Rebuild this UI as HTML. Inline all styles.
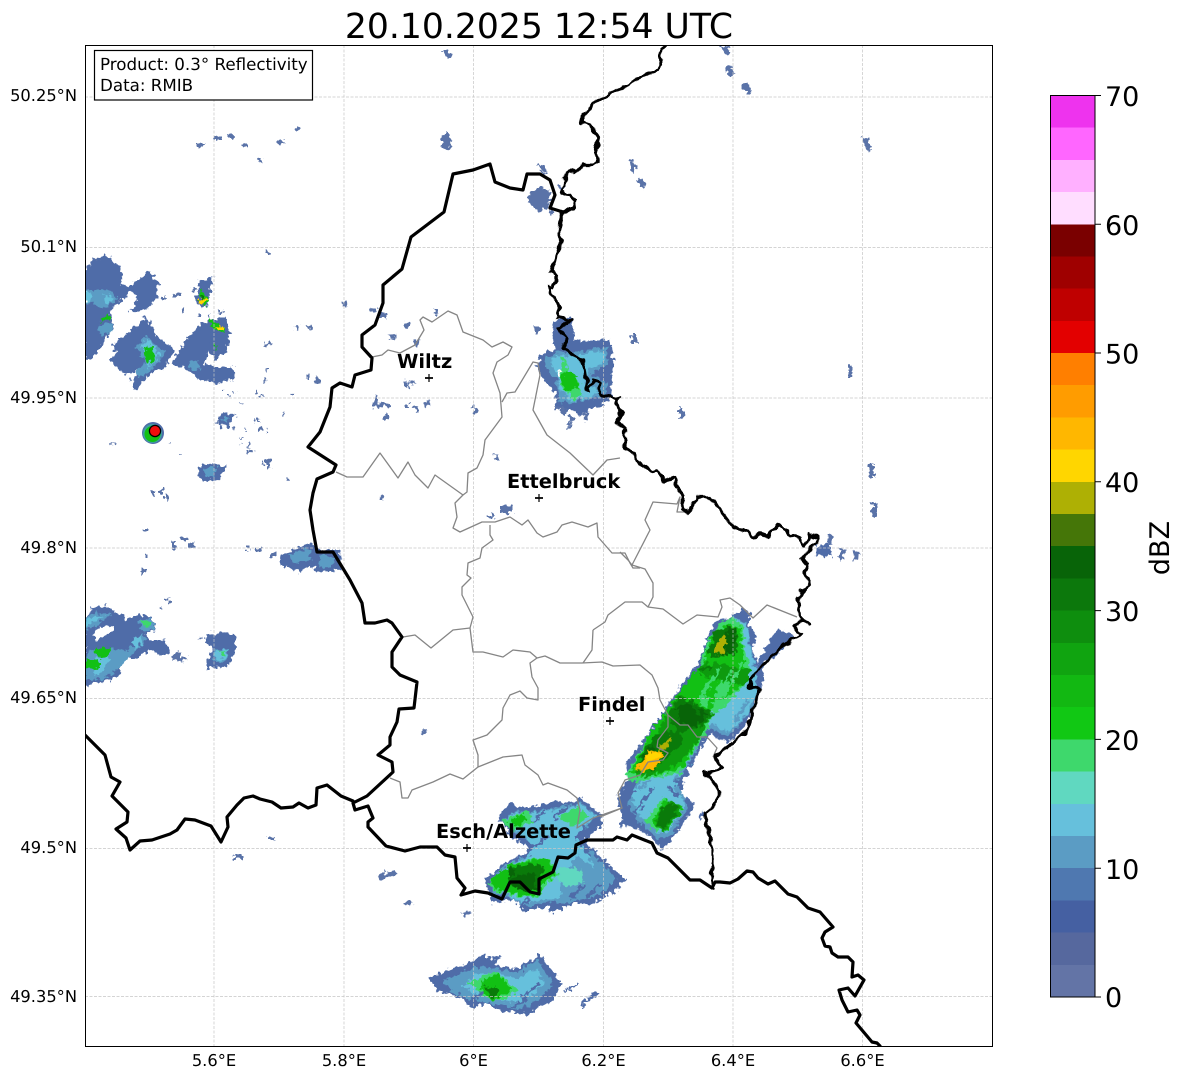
<!DOCTYPE html>
<html><head><meta charset="utf-8"><title>Radar</title>
<style>
html,body{margin:0;padding:0;background:#fff}
svg{display:block;text-rendering:geometricPrecision}
text{font-family:"DejaVu Sans","Liberation Sans",sans-serif;fill:#000}
.t{font-size:16.3px}
.u{font-size:16.7px}
.c{font-size:27px}
.n{font-size:19.4px;font-weight:bold}
.bd{fill:none;stroke:#000;stroke-width:3.2;stroke-linejoin:round;stroke-linecap:round}
.gy{fill:none;stroke:#858585;stroke-width:1.3;stroke-linejoin:round}
.gr{stroke:#c6c6c6;stroke-width:.7;stroke-dasharray:3 1.5;fill:none}
.b{fill:#4f6ca8}.d{fill:#4560a2}.m{fill:#5b9cc4}.l{fill:#66c0dc}.q{fill:#60d8c0}.g{fill:#3ed86c}.h{fill:#12c014}.i{fill:#0e9a0e}.k{fill:#0a7a0a}.e{fill:#086408}.o{fill:#aeb004}.y{fill:#ffd600}.a{fill:#ffb700}
.p{fill:#5a73a8}
.s{fill:none;stroke-width:9}
</style></head><body>
<svg width="1184" height="1081" viewBox="0 0 1184 1081" xmlns="http://www.w3.org/2000/svg">
<rect width="1184" height="1081" fill="#fff"/>
<defs>
<clipPath id="ax"><rect x="85" y="45" width="907.5" height="1001"/></clipPath>
<filter id="r" x="0" y="0" width="1184" height="1081" filterUnits="userSpaceOnUse" color-interpolation-filters="sRGB">
<feTurbulence type="fractalNoise" baseFrequency=".22" numOctaves="2" seed="5" result="n"/>
<feDisplacementMap in="SourceGraphic" in2="n" scale="9" xChannelSelector="R" yChannelSelector="G"/>
</filter>
<filter id="w" x="0" y="0" width="1184" height="1081" filterUnits="userSpaceOnUse" color-interpolation-filters="sRGB">
<feTurbulence type="fractalNoise" baseFrequency=".14" numOctaves="1" seed="9" result="n"/>
<feDisplacementMap in="SourceGraphic" in2="n" scale="8" xChannelSelector="R" yChannelSelector="G"/>
</filter>
</defs>
<g clip-path="url(#ax)">
<g filter="url(#r)">
<!-- upper left -->
<g transform="translate(85 240) scale(.3333)">
<polygon class="b" points="0,90 25,60 60,40 110,90 110,130 140,150 75,215 85,270 60,300 20,360 0,365"/>
<polygon class="b" points="125,145 195,90 220,130 215,180 175,215 135,215 160,170"/>
<polygon class="b" points="80,315 140,270 185,225 215,290 270,330 240,385 210,390 150,450 140,425 165,390 120,405 75,360 95,340"/>
<polygon class="b" points="260,370 300,300 350,250 375,240 420,230 435,270 425,335 395,360 370,335 355,375 450,385 445,420 400,430 345,420 310,390"/>
<polygon class="b" points="300,300 375,250 385,300 365,335 350,385 300,385"/>
<polygon class="b" points="345,120 385,110 365,200 345,200 330,175"/>
<polygon class="m" points="0,150 30,150 70,150 100,175 60,205 20,190 0,190"/>
<polygon class="l" points="0,155 20,165 15,185 0,185"/><polygon class="l" points="55,160 90,175 65,195"/>
<polygon class="m" points="40,250 80,250 80,280 45,285"/>
<polygon class="m" points="150,320 185,285 240,340 200,390 175,410 150,400 185,365"/>
<polygon class="l" points="165,320 190,295 225,345 190,385 195,360"/>
<polygon class="m" points="310,370 340,360 345,390 320,390"/>
<polygon class="h" points="170,335 195,315 215,350 200,370 180,355"/>
<polygon class="h" points="45,240 70,220 75,235 50,245"/>
<polygon class="h" points="340,170 350,145 375,185 360,200"/>
<polygon class="h" points="375,235 420,270 410,280 375,255"/>
<polygon class="h" points="385,312 395,312 392,328"/>
<path class="y" d="M345 178h22v10h-22zM400 258h14v12h-14z"/>
<path class="k" d="M345 170h12v8h-12z"/>
<path class="p" d="M20 55h22v8h-22zM230 170h10v10h-10zM265 160h22v14h-22zM290 208h8v8h-8zM318 145h12v8h-12zM335 220h8v8h-8zM370 225h8v8h-8zM400 210h10v12h-10zM415 215h6v6h-6zM548 34h10v8h-10zM773 185h10v12h-10zM631 258h10v10h-10zM669 256h10v8h-10zM541 308h18v8h-18zM544 385h8v8h-8zM537 417h8v8h-8zM666 405h8v8h-8zM690 412h14v12h-14zM618 457h9v8h-9zM411 450h5v6h-5zM427 465h8v8h-8zM444 453h5v5h-5zM510 452h6v6h-6zM528 462h8v8h-8zM465 486h5v5h-5zM591 521h9v4h-9zM504 540h8v4h-8zM520 538h5v8h-5zM516 565h14v10h-14zM542 565h6v8h-6zM480 568h5v5h-5zM468 591h5v5h-5zM488 605h8v18h-8zM490 630h12v8h-12zM546 658h12v30h-12zM530 668h6v8h-6zM606 713h8v6h-8zM74 611h16v3h-16zM250 610h4v4h-4zM285 642h6v4h-6zM465 610h6v4h-6zM440 562h8v6h-8z"/>
<polygon class="b" points="405,530 425,515 445,530 435,555 415,555"/>
<polygon class="m" points="415,530 430,525 435,540 422,548"/>
<path class="p" d="M392 545h10v6h-10zM448 525h6v6h-6z"/>
<polygon class="b" points="335,680 425,680 405,715 345,720"/>
<polygon class="m" points="350,690 375,685 372,705 355,705"/>
</g>
<!-- west small -->
<polygon class="b" points="279,556 310,543 320,550 340,550 342,570 320,572 310,565 300,572 280,565"/>
<polygon class="m" points="288,555 308,548 312,560 294,563"/><polygon class="m" points="318,555 334,556 332,566 320,568"/>
<!-- lower left -->
<g transform="translate(85 590) scale(.3333)">
<polygon class="b" points="0,90 20,50 70,45 90,70 115,75 125,90 160,75 200,80 215,120 185,130 190,150 235,150 260,185 235,200 190,180 160,205 105,210 100,260 30,280 0,285"/>
<polygon fill="#fff" points="25,130 45,110 88,108 80,130 30,150"/>
<polygon class="m" points="0,90 20,70 80,70 30,110 0,120"/>
<polygon class="l" points="5,92 30,78 55,78 20,100 0,112"/>
<polygon class="m" points="160,90 200,85 212,120 175,125"/>
<polygon class="m" points="10,180 80,175 130,180 170,130 180,150 140,200 70,260 30,270 0,270"/>
<polygon class="l" points="30,205 75,195 50,250 25,255"/><polygon class="l" points="145,145 170,135 170,160 145,180"/>
<polygon class="h" points="30,175 80,175 70,200 35,200"/><polygon class="h" points="0,210 45,210 45,235 0,235"/>
<polygon class="g" points="170,90 200,95 195,110 175,110"/>
<polygon class="b" points="365,130 450,130 450,190 425,230 365,235 380,170 360,160"/>
<polygon class="m" points="385,178 430,178 425,212 385,215"/>
<polygon class="l" points="390,182 428,180 420,205 392,208"/><polygon class="g" points="395,182 425,185 410,198"/>
<polygon class="p" points="262,208 275,185 285,185 285,200 308,205 285,218"/>
<path class="p" d="M240 25h12v8h-12zM250 35h8v10h-8zM222 50h8v8h-8zM346 140h10v8h-10z"/>
</g>
<!-- NE blob -->
<g transform="translate(300 160) scale(.3333)">
<polygon class="p" points="690,100 720,78 755,95 745,145 715,155 685,130"/>
<path class="p" d="M716 16l12-3 12 22-12 3zM768 72l12-3 10 16-12 3zM743 150l10-3 8 14-10 3zM128 425h12v14h-12zM215 442h14v14h-14zM240 456h18v18h-18zM314 487h14v14h-14zM268 520h20v18h-20zM341 538h18v18h-18zM401 448h14v18h-14zM23 496h14v12h-14zM19 645h13v10h-13zM43 652h16v14h-16zM313 664h13v16h-13zM328 660h16v16h-16zM223 706h11v14h-11zM218 720h14v24h-14zM232 728h38v12h-38zM316 732h12v12h-12zM343 740h13v16h-13zM376 722h13v18h-13zM250 762h14v16h-14zM520 740h13v20h-13zM583 880h10v20h-10zM703 498h14v22h-14zM238 1006h12v14h-12z"/>
</g>
<!-- N cell -->
<g transform="translate(500 300) scale(.3333)">
<polygon class="b" points="160,65 215,50 222,115 240,115 240,125 332,118 342,185 332,240 338,295 305,316 270,325 250,345 170,325 165,280 130,240 110,190 130,160 165,150 155,95"/>
<polygon class="m" points="135,170 190,155 235,155 320,140 322,190 270,225 318,245 318,285 260,300 190,310 175,280 170,240 140,210"/>
<polygon class="l" points="150,175 190,165 235,165 315,150 315,185 265,205 255,250 300,270 260,295 195,300 180,270 175,235"/>
<polygon class="m" points="175,275 200,280 205,310 180,310"/>
<polygon class="g" points="185,170 195,170 205,215 235,240 245,290 220,298 180,255"/>
<polygon class="h" points="180,240 195,212 230,225 235,260 200,275"/>
<rect x="172" y="215" width="12" height="15" fill="#fff"/>
<path class="p" d="M208 345h14v22h-14zM253 340h12v24h-12zM203 368h10v20h-10zM183 325h12v20h-12zM103 78h14v22h-14zM395 102h16v28h-16zM165 320h30v8h-30z"/>
</g>
<!-- SE main cell -->
<g transform="translate(600 600) scale(.3333)">
<polygon class="b" points="395,50 430,25 452,40 445,65 470,110 455,150 470,180 470,225 480,260 470,300 440,370 385,430 330,400 310,430 265,510 240,580 285,615 245,680 190,750 150,710 100,680 60,680 65,640 50,590 90,530 75,495 125,430 200,320 240,260 300,180 320,120 345,65"/>
<polygon class="b" points="470,190 530,90 580,105 540,160 490,190 490,255 470,260"/>
<polygon class="b" points="292,655 312,630 318,640 298,662"/>
<polygon class="m" points="400,50 440,70 455,150 470,215 470,295 440,355 385,410 330,385 300,425 260,505 225,545 255,595 262,625 210,710 180,720 110,660 80,610 110,545 80,530 110,470 240,280 300,200 325,120"/>
<polygon class="l" points="400,55 440,75 450,150 468,215 468,285 440,345 385,395 330,370 300,420 255,500 220,540 250,590 255,620 205,695 180,700 120,650 95,590 125,540 85,530 115,470 240,285 300,205 328,125"/>
<polygon class="g" points="390,50 430,80 430,150 450,180 445,245 400,290 360,335 340,335 320,400 290,440 240,520 190,530 130,540 85,545 80,520 150,400 240,280 300,200 320,130 360,70"/>
<polygon class="h" points="375,75 420,80 430,180 440,240 400,280 340,305 330,350 300,410 250,500 190,520 120,530 90,520 150,400 235,280 290,210 310,190 330,120"/>
<polygon class="g" points="355,250 395,245 380,285 345,300"/><polygon class="g" points="300,285 330,290 320,320 300,315"/>
<polygon class="i" points="300,190 350,190 450,210 440,255 360,240 300,225"/>
<polygon class="i" points="220,310 240,285 340,340 320,370 300,410 250,480 200,510 140,530 100,520 170,400"/>
<polygon class="k" points="225,315 245,290 335,340 310,375 240,400 200,345"/>
<polygon class="k" points="130,450 170,400 240,390 250,430 200,470 160,510 110,515"/>
<polygon class="e" points="230,320 260,310 320,340 290,380 240,370"/>
<polygon class="k" points="340,90 385,80 415,90 410,160 340,170 320,145 340,125"/>
<polygon class="e" points="385,85 410,90 400,160 365,165 375,110"/>
<polygon class="o" points="365,110 380,110 375,162 340,160 345,140"/>
<polygon class="e" points="115,490 150,440 170,445 130,500"/>
<polygon class="o" points="175,440 215,410 205,440 180,460"/>
<polygon class="a" points="150,450 190,460 170,500 130,515 100,510 130,480"/>
<polygon class="y" points="148,452 185,462 165,480 140,480"/>
<polygon class="g" points="135,665 190,590 250,630 190,690 165,690"/>
<polygon class="h" points="155,670 195,595 250,625 195,700 170,680"/>
<polygon class="i" points="175,640 210,600 245,630 190,700 165,675"/>
<polygon class="k" points="190,620 215,610 235,630 190,690 170,670"/>
<path class="s" stroke="#3ed86c" d="M305 285L360 205M350 270L395 215M395 250L425 190"/>
<path class="s" stroke="#66c0dc" d="M160 560L200 530M375 370L430 285M130 620L170 570"/>
<path class="s" stroke="#5b9cc4" d="M400 370L445 300M115 570L150 540M225 560L255 600"/>
<path class="s" stroke="#4f6ca8" d="M420 385L455 330M105 640L160 560M200 560L240 590M60 620L105 570"/>
<path class="s" stroke="#0a7a0a" d="M270 300L300 345M300 215L335 195"/>
</g>
<!-- Esch cell -->
<g transform="translate(420 790) scale(.3333)">
<polygon class="b" points="270,35 300,50 340,50 380,40 405,30 430,40 460,30 490,25 550,80 540,110 490,150 610,265 570,310 510,345 470,335 400,370 385,350 340,360 310,360 280,325 250,335 215,340 195,265 260,215 320,190 325,170 280,145 235,85"/>
<polygon class="m" points="250,90 290,60 320,70 340,65 400,55 440,45 490,40 530,80 470,140 590,265 540,315 430,340 400,335 310,350 270,320 215,310 215,265 260,225 325,195 340,165 290,130"/>
<polygon class="b" points="325,110 495,110 510,190 480,240 320,240"/>
<polygon class="l" points="255,90 290,65 320,75 340,70 400,60 440,50 490,45 525,80 465,140 500,190 530,250 480,310 430,320 400,325 310,340 270,315 225,305 220,265 260,230 325,200 345,165 295,125"/>
<polygon class="m" points="470,195 560,265 500,320 420,330 430,260"/>
<polygon class="q" points="420,230 490,240 490,280 440,290 410,270"/>
<polygon class="g" points="245,95 320,60 340,95 280,125"/><polygon class="h" points="265,95 310,70 320,90 285,110"/>
<polygon class="g" points="420,80 470,50 510,80 460,110"/>
<polygon class="g" points="205,280 270,225 340,205 385,205 415,250 370,295 370,315 320,325 280,315 225,305"/>
<polygon class="h" points="215,265 270,225 340,210 380,205 410,250 360,290 370,310 320,320 280,310 225,300"/>
<polygon class="k" points="265,235 330,220 375,230 350,300 300,300 270,290"/>
<polygon class="e" points="265,280 300,250 340,250 350,300 300,300"/>
<polygon class="e" points="262,232 285,240 270,265"/>
<path class="b" d="M130 376l22-14 4 5-22 14zM570 310l38-46 6 5-38 46zM585 295l28-34 4 4-28 34z"/>
<path class="s" stroke="#4f6ca8" d="M400 85L445 50M340 95L375 65M345 170L385 135M450 325L495 285M500 320L540 285M385 365L415 340M300 345L330 330"/>
<polygon class="b" points="25,565 80,540 145,520 195,490 200,505 245,500 225,525 290,535 360,495 425,580 400,630 320,675 270,665 230,660 200,640 145,655 130,625 50,600 40,590"/>
<polygon class="m" points="70,570 170,530 240,535 290,550 350,510 400,580 360,625 300,660 210,640 150,630 95,605"/>
<polygon class="l" points="125,590 170,555 240,550 290,570 345,535 375,580 345,610 290,640 210,625 160,610"/>
<polygon class="g" points="145,575 230,545 275,585 300,600 250,630 210,630 170,600"/>
<polygon class="h" points="180,575 235,550 265,590 275,600 220,630 190,610"/>
<polygon class="k" points="190,590 230,590 240,610 215,625"/>
<path class="s" stroke="#4f6ca8" d="M305 620L355 585M280 650L320 625M150 635L190 610M40 575L85 555M115 540L170 510"/>
<path class="b" d="M445 600l22-22 6 6-22 22zM478 645l55-46 6 7-55 46zM430 600l10-10 5 5-10 10z"/>
</g>
<!-- misc marks -->
<path class="p" d="M442 50l6 0 4 7-6 1zM720 45l5-1 6 9-5 2zM725 67l5-2 5 10-5 2zM743 85l5-2 4 10-5 2zM862 138l5-2 5 14-5 2zM628 162l5-2 4 9-5 2zM637 180l5-2 4 9-5 2zM441 138l6-5 5 6-2 11-6-2-3-4zM198 143h6v4h-6zM215 137h7v3h-7zM228 134h6v3h-6zM242 144h5v4h-5zM258 157l6 2-1 3-6-2zM278 140h6v3h-6zM296 126l6 2-1 3-6-2zM539 166l5-1 3 6-5 1zM631 334h5v10h-5zM848 365h5v13h-5zM679 408h5v11h-5zM869 464h5v13h-5zM872 502h5v14h-5zM840 548l5 1-1 12-5-1zM854 550l5 1-1 10-5-1zM829 534l4 1-1 10-4-1zM266 251h4v3h-4zM160 488h3v6h-3zM152 492h3v4h-3zM165 495h3v5h-3zM143 529h3v3h-3zM172 542h3v8h-3zM182 538h4v4h-4zM190 542h4v6h-4zM145 554h3v3h-3zM141 570h4v4h-4zM246 546h4v3h-4zM256 549h6v3h-6zM270 553h6v4h-6zM266 460h4v8h-4zM234 854h8v5h-8zM268 837h8v3h-8zM378 875l17-5 2 4-17 6zM403 903l9-3 1 3-9 4zM463 913l8-4 1 3-8 4zM420 732l5-3 2 3-5 3zM500 505h12v8h-12zM489 515l5-1v5h-5z"/>
<polygon class="b" points="815,546 829,544 832,557 816,556"/>
<polygon class="b" points="197,467 212,463 226,468 218,480 203,481"/>
<polygon class="m" points="204,468 218,467 214,477 206,477"/>
<polygon class="b" points="219,416 226,411 234,417 228,427 220,426"/>
<polygon class="m" points="223,417 229,416 227,423"/>
</g>
<!-- station -->
<circle cx="153" cy="433" r="11" fill="#4f6ca8"/><circle cx="152.5" cy="433.5" r="9.5" fill="#3ea0a0"/><circle cx="152.5" cy="434" r="8" fill="#12c014"/>
<circle cx="155" cy="431" r="5.6" fill="#f00c0c" stroke="#000" stroke-width="1.2"/>
<!-- gridlines -->
<path class="gr" d="M214 45V1046M344 45V1046M473.5 45V1046M603.5 45V1046M733 45V1046M862.5 45V1046M85 97H992M85 247.5H992M85 398H992M85 548H992M85 698.5H992M85 848.5H992M85 996.5H992"/>
<!-- grey lines -->
<g class="gy">
<polyline points="372,357 382,355 388,350 400,353 415,345 424,330 420,320 423,317 432,322 448,311 457,315 463,332 483,340 492,347 503,342 512,347 508,355 497,362 493,373 500,393 502,417 485,440 483,455 477,468 468,473 467,492 463,495 455,503 457,517 453,528 460,532 482,522 495,522 510,517 522,525 528,520 537,533 543,537 557,532 562,525 572,522 588,527 597,523 598,537 612,553 625,553 630,563 633,568 640,568"/>
<polyline points="502,402 507,393 515,392 533,362 538,363 540,375 533,410 547,435 570,453 593,475 607,460 620,458"/>
<polyline points="336,472 347,477 363,477 380,453 398,478 408,462 415,475 428,488 435,475 442,480 463,495"/>
<polyline points="620,552 628,560 632,565 645,569 653,583 653,597 648,607"/>
<polyline points="632,565 650,530 645,520 653,502 677,504 680,497 677,512 685,512"/>
<polyline points="593,630 605,622 608,615 625,602 642,602 648,607 663,609 683,624 697,615 718,617 722,607 720,600 730,598 740,605 753,618 767,605 797,617"/>
<polyline points="490,525 490,535 493,540 482,548 480,558 468,563 467,575 471,578 462,587 462,595 473,617 470,628 453,630 431,648 415,635 403,637"/>
<polyline points="470,628 473,652 483,652 503,657 513,650 530,652 537,658 530,663 532,677 538,688 538,700 527,698 520,691 510,695 503,708 502,720 487,735 473,740 478,755 478,767 463,779 450,774 433,782 412,790 408,798 402,798 400,782 390,778"/>
<polyline points="478,767 503,757 522,755 525,765 538,775 543,785 548,783 567,790 577,798 580,810 577,828 593,818 622,808"/>
<polyline points="537,658 545,656 560,663 582,663 602,662 613,666 640,665 652,675 658,688 660,700 668,715 680,725 688,725 697,737 707,737 717,748 713,757"/>
<polyline points="583,663 592,650 593,630"/>
<polyline points="668,715 668,727 658,740 657,747 668,753 663,760 648,762 640,775 625,780 618,793 622,808 600,817"/>
</g>
<!-- black borders -->
<g class="bd">
<polyline filter="url(#w)" points="666,45 660,50 661,65 655,72 640,76 630,85 615,90 607,95 588,108 581,122 590,125 599,138 596,150 598,162 593,165 582,165 575,173 570,170 565,177 565,187 560,192 570,195 575,200 573,208 563,212 558,232 562,243 557,253 551,272 557,275 553,287 548,287 550,292 560,307 557,317 572,320 558,328 568,338 563,348 575,357 582,360 585,372 588,392 593,380 600,383 600,393 607,397 618,398 617,407 622,415 617,423 625,428 625,447 633,453 643,467 652,471 657,470 665,481 675,478 677,487 683,497 682,508 687,512 692,507 697,497 710,497 720,510 733,527 748,532 753,537 760,534 768,536 779,525 790,535 800,538 805,547 810,535 817,537 817,543 802,558 808,565 805,572 808,580 810,587 802,592 798,597 800,617 810,625 803,620 793,625 802,635 787,643 770,657 750,680 750,687 760,688 747,730 733,743 715,757 720,767 718,770 705,773 720,790 717,803 705,813 712,850 712,888"/>
<polyline points="563,212 550,208 555,195 550,180 540,174 527,174 523,190 510,188 495,182 490,164 473,170 453,174 444,212 411,237 402,269 383,285 383,303 375,325 362,335 362,347 372,358 371,370 355,375 352,387 340,383 332,388 330,407 320,432 308,447 336,465 333,472 317,479 313,493 310,510 313,530 317,552 333,552 350,580 362,603 365,623 375,623 387,620 392,623 402,637 392,652 392,667 400,675 417,682 414,708 399,709 397,722 390,737 390,745 378,755 392,762 393,772 367,796 353,803 355,810 368,806 373,818 368,822 368,827 386,846 405,851 420,847 437,847 445,855 455,857 457,878 465,888 461,895 475,891 488,893 502,899 510,882 520,882 530,892 539,894 539,879 553,872 558,857 568,858 575,853 576,845 587,840 613,840 617,837 627,840 632,835 652,843 657,853 668,858 680,870 690,880 700,880 712,888 715,882 720,882 730,883 738,879 747,871 753,872 758,878 768,884 775,881 788,894 797,897 808,908 820,912 833,927 825,932 822,938 825,946 830,947 832,953 838,957 848,957 853,962 852,977 858,975 864,980 855,996 848,988 839,990 842,1000 848,1012 857,1010 860,1015 856,1023 872,1042 877,1043 880,1046"/>
<polyline points="85,735 105,755 111,777 120,782 112,796 128,812 127,822 116,829 126,838 130,850 140,841 152,840 170,834 177,830 185,819 195,820 211,826 221,842 228,827 227,817 237,805 244,798 253,796 260,799 272,802 281,808 293,807 299,803 308,808 316,805 317,788 327,785 341,796 353,801"/>
</g>
<!-- markers -->
<path stroke="#000" stroke-width="1.8" fill="none" d="M425 378h8M535 498h8M606 721h8M463 848h8"/>
<path stroke="#000" stroke-width="1.2" fill="none" d="M429 374v8M539 494v8M610 717v8M467 844v8"/>
<!-- city labels -->
<text class="n" x="397" y="368">Wiltz</text>
<text class="n" x="507" y="488">Ettelbruck</text>
<text class="n" x="578" y="711">Findel</text>
<text class="n" x="436" y="838">Esch/Alzette</text>
<!-- info box -->
<rect x="94.5" y="50.5" width="218" height="49.5" fill="#fff" stroke="#000" stroke-width="1.2"/>
<text class="u" x="100" y="70">Product: 0.3° Reflectivity</text>
<text class="u" x="100" y="91">Data: RMIB</text>
</g>
<rect x="85.5" y="45.5" width="907" height="1001" fill="none" stroke="#000" stroke-width="1"/>
<!-- title -->
<text x="539" y="38" font-size="34.6" text-anchor="middle">20.10.2025 12:54 UTC</text>
<!-- ticks labels -->
<g text-anchor="end">
<text class="t" x="77" y="101">50.25°N</text>
<text class="t" x="77" y="252">50.1°N</text>
<text class="t" x="77" y="403">49.95°N</text>
<text class="t" x="77" y="553">49.8°N</text>
<text class="t" x="77" y="703">49.65°N</text>
<text class="t" x="77" y="853">49.5°N</text>
<text class="t" x="77" y="1002">49.35°N</text>
</g>
<g text-anchor="middle">
<text class="t" x="214" y="1066">5.6°E</text>
<text class="t" x="344" y="1066">5.8°E</text>
<text class="t" x="473.5" y="1066">6°E</text>
<text class="t" x="603.5" y="1066">6.2°E</text>
<text class="t" x="733" y="1066">6.4°E</text>
<text class="t" x="862.5" y="1066">6.6°E</text>
</g>
<!-- colorbar -->
<g shape-rendering="crispEdges">
<rect x="1050.5" y="95.5" width="44.5" height="32.2" fill="#ee33ee"/>
<rect x="1050.5" y="127.7" width="44.5" height="32.2" fill="#ff66ff"/>
<rect x="1050.5" y="159.9" width="44.5" height="32.2" fill="#ffb0ff"/>
<rect x="1050.5" y="192.1" width="44.5" height="32.2" fill="#ffddff"/>
<rect x="1050.5" y="224.3" width="44.5" height="32.2" fill="#7a0000"/>
<rect x="1050.5" y="256.5" width="44.5" height="32.2" fill="#9f0000"/>
<rect x="1050.5" y="288.7" width="44.5" height="32.2" fill="#bf0000"/>
<rect x="1050.5" y="320.9" width="44.5" height="32.2" fill="#e30000"/>
<rect x="1050.5" y="353" width="44.5" height="32.2" fill="#ff7f00"/>
<rect x="1050.5" y="385.2" width="44.5" height="32.2" fill="#ff9c00"/>
<rect x="1050.5" y="417.4" width="44.5" height="32.2" fill="#ffb700"/>
<rect x="1050.5" y="449.6" width="44.5" height="32.2" fill="#ffd600"/>
<rect x="1050.5" y="481.8" width="44.5" height="32.2" fill="#aeb004"/>
<rect x="1050.5" y="514" width="44.5" height="32.2" fill="#457608"/>
<rect x="1050.5" y="546.2" width="44.5" height="32.2" fill="#086408"/>
<rect x="1050.5" y="578.4" width="44.5" height="32.2" fill="#0c780c"/>
<rect x="1050.5" y="610.6" width="44.5" height="32.2" fill="#0e8e0e"/>
<rect x="1050.5" y="642.8" width="44.5" height="32.2" fill="#10a410"/>
<rect x="1050.5" y="675" width="44.5" height="32.2" fill="#12b812"/>
<rect x="1050.5" y="707.2" width="44.5" height="32.2" fill="#11c814"/>
<rect x="1050.5" y="739.4" width="44.5" height="32.2" fill="#3ed86c"/>
<rect x="1050.5" y="771.6" width="44.5" height="32.2" fill="#60d8c0"/>
<rect x="1050.5" y="803.8" width="44.5" height="32.2" fill="#66c0dc"/>
<rect x="1050.5" y="836" width="44.5" height="32.2" fill="#5b9cc4"/>
<rect x="1050.5" y="868.2" width="44.5" height="32.2" fill="#4f78b0"/>
<rect x="1050.5" y="900.4" width="44.5" height="32.2" fill="#4560a2"/>
<rect x="1050.5" y="932.6" width="44.5" height="32.2" fill="#56689e"/>
<rect x="1050.5" y="964.8" width="44.5" height="32.2" fill="#6374a6"/>
</g>
<rect x="1050.5" y="95.5" width="44.5" height="901.5" fill="none" stroke="#000" stroke-width="1"/>
<path stroke="#000" stroke-width="1" fill="none" d="M1095 95.5h6M1095 224.3h6M1095 353h6M1095 481.8h6M1095 610.6h6M1095 739.4h6M1095 868.2h6M1095 997h6"/>
<text class="c" x="1105" y="106">70</text>
<text class="c" x="1105" y="235">60</text>
<text class="c" x="1105" y="363.5">50</text>
<text class="c" x="1105" y="492">40</text>
<text class="c" x="1105" y="621">30</text>
<text class="c" x="1105" y="750">20</text>
<text class="c" x="1105" y="879">10</text>
<text class="c" x="1105" y="1007">0</text>
<text class="c" transform="translate(1169 548) rotate(-90)" text-anchor="middle">dBZ</text>
</svg>
</body></html>
